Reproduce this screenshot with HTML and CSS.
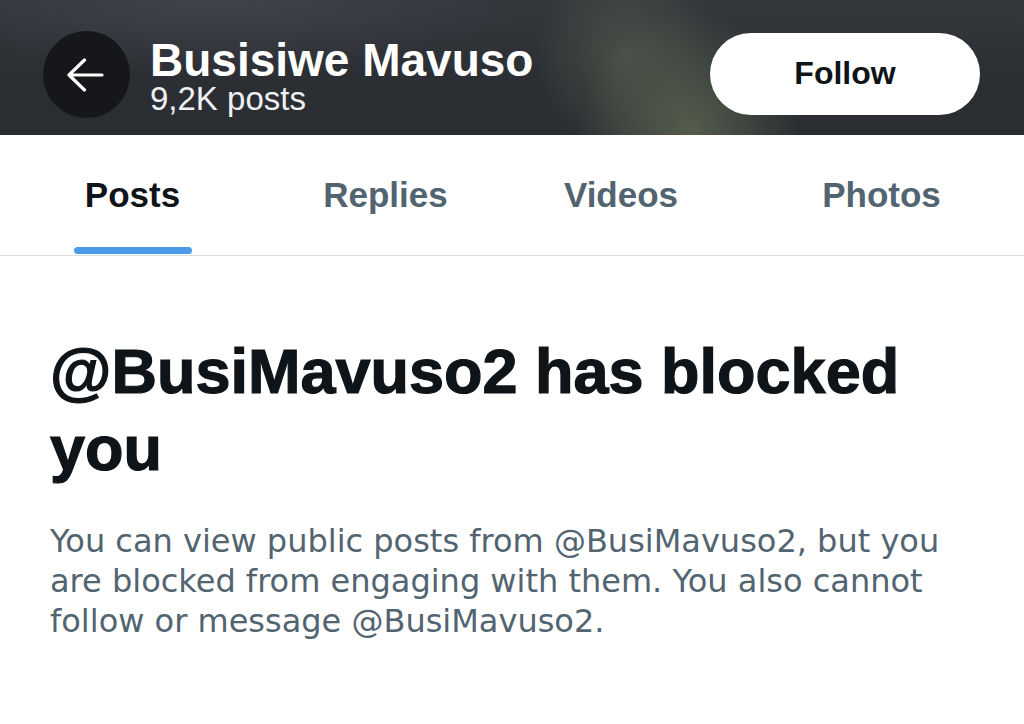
FILE: index.html
```html
<!DOCTYPE html>
<html lang="en">
<head>
<meta charset="utf-8">
<title>Busisiwe Mavuso</title>
<link rel="stylesheet" href="styles.css">
</head>
<body>
  <header class="topbar">
    <button class="back" aria-label="Back">
      <svg class="back-icon" viewBox="0 0 40 34" width="40" height="34">
        <path d="M4 17 H37 M19.5 2 L4 17 L19.5 32" fill="none" stroke="#ffffff" stroke-width="3.2" stroke-linecap="round" stroke-linejoin="round"/>
      </svg>
    </button>
    <div class="identity">
      <div class="name">Busisiwe Mavuso</div>
      <div class="count">9,2K posts</div>
    </div>
    <button class="follow">Follow</button>
  </header>

  <nav class="tabs">
    <div class="tab tab-posts active"><span class="label">Posts</span><span class="indicator"></span></div>
    <div class="tab tab-replies"><span class="label">Replies</span></div>
    <div class="tab tab-videos"><span class="label">Videos</span></div>
    <div class="tab tab-photos"><span class="label">Photos</span></div>
  </nav>

  <main class="blocked">
    <h1 class="title">@BusiMavuso2 has blocked you</h1>
    <p class="desc">You can view public posts from @BusiMavuso2, but you are blocked from engaging with them. You also cannot follow or message @BusiMavuso2.</p>
  </main>
</body>
</html>
```

FILE: styles.css
```css
* { box-sizing: border-box; }

html, body {
  margin: 0;
  padding: 0;
  background: #ffffff;
}

body {
  width: 1024px;
  height: 724px;
  overflow: hidden;
  font-family: "Liberation Sans", Arial, sans-serif;
  color: #0f1419;
}

.topbar {
  height: 135px;
  display: flex;
  align-items: flex-start;
  padding: 31px 44px 0 43px;
  background:
    radial-gradient(ellipse 110px 120px at 690px 130px, rgba(98, 108, 84, 0.75), rgba(98, 108, 84, 0) 100%),
    radial-gradient(ellipse 90px 100px at 625px 55px, rgba(88, 98, 80, 0.6), rgba(88, 98, 80, 0) 100%),
    radial-gradient(ellipse 300px 70px at 220px 0px, rgba(72, 76, 82, 0.6), rgba(72, 76, 82, 0) 100%),
    linear-gradient(180deg, #34383d 0%, #2b2f34 60%, #2a2e33 100%);
}

.back {
  width: 87px;
  height: 87px;
  border-radius: 50%;
  border: none;
  padding: 0;
  background: #15171a;
  display: flex;
  align-items: center;
  justify-content: center;
  flex: none;
}

.back-icon {
  display: block;
  margin-left: -4px;
}

.identity {
  margin-left: 20px;
  margin-top: 5px;
  color: #ffffff;
}

.name {
  font-size: 46px;
  font-weight: 700;
  line-height: 48px;
}

.count {
  font-size: 33px;
  line-height: 30px;
  color: #eef0f2;
}

.follow {
  margin-left: auto;
  margin-top: 2px;
  width: 270px;
  height: 82px;
  border-radius: 41px;
  border: none;
  background: #ffffff;
  color: #0f1419;
  font-family: "Liberation Sans", Arial, sans-serif;
  font-size: 32px;
  font-weight: 700;
  display: flex;
  align-items: center;
  justify-content: center;
  padding: 0 0 2px 0;
}

.tabs {
  height: 121px;
  display: flex;
  border-bottom: 1px solid #dcdfe2;
}

.tab {
  display: flex;
  flex-direction: column;
  align-items: center;
  padding-top: 40px;
  color: #536471;
  font-size: 35px;
  font-weight: 700;
}

.tab .label {
  line-height: 40px;
}

.tab-posts { width: 265px; }
.tab-replies { width: 241px; }
.tab-videos { width: 230px; }
.tab-photos { flex: 1; padding-left: 3px; }

.tab.active { color: #0f1419; }

.indicator {
  display: block;
  width: 118px;
  height: 7px;
  margin-top: 32px;
  border-radius: 4px;
  background: #4c9be8;
}

.blocked {
  padding: 0 50px;
}

.title {
  margin: 77px 0 0 0;
  font-size: 63px;
  line-height: 77px;
  font-weight: 700;
  color: #0f1419;
  -webkit-text-stroke: 1.2px #0f1419;
}

.desc {
  margin: 34px 0 0 0;
  font-family: "DejaVu Sans", "Liberation Sans", sans-serif;
  font-size: 32px;
  line-height: 40px;
  color: #536471;
}
```
